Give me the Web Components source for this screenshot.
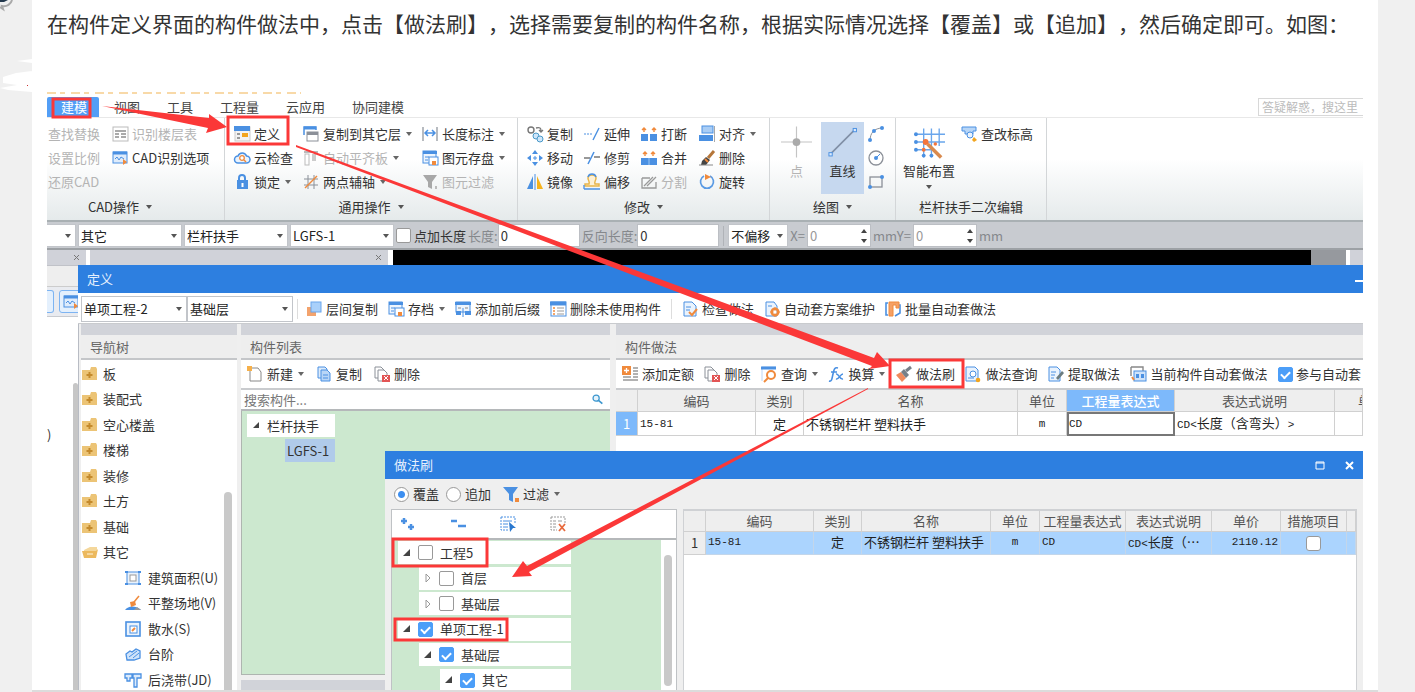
<!DOCTYPE html>
<html lang="zh-CN">
<head>
<meta charset="utf-8">
<title>构件做法 - 做法刷</title>
<style>
html, body { margin: 0; height: 100%; }
body {
  background: #f0f0f0; color: #333; overflow: hidden;
  font: 13px/20px "Noto Sans CJK SC", sans-serif;
  text-spacing-trim: space-all;
}
</style>
</head>
<body>
<help-page></help-page>
<script>
const B = '#4a90e2', O = '#f08a3c', G = '#9a9fa6';
const ICONS = {
  table: `<rect x="1" y="1" width="15" height="14" fill="#fff" stroke="#bbb"/><path d="M3 5h11M3 8h4M9 8h5M3 11h4M9 11h5" stroke="#aaa" stroke-width="2"/>`,
  cadopt: `<rect x="1" y="2" width="14" height="11" fill="#dfecfb" stroke="${B}"/><path d="M1 3h14" stroke="${B}" stroke-width="3"/><path d="M3 9l2-2 2 3 2-3 3 2" stroke="${B}" fill="none"/><path d="M11 9l4 3-4 3z" fill="${O}"/>`,
  define: `<rect x="1" y="1" width="15" height="14" fill="#f3f3f3" stroke="#ccc"/><path d="M0 2.500h16" stroke="${B}" stroke-width="5"/><path d="M3 8h3M3 12h3" stroke="#999" stroke-width="2"/><rect x="8" y="7" width="6" height="4" fill="#f2a51f"/>`,
  cloud: `<path d="M4 13a3.500 3.500 0 0 1 0-7 4.500 4.500 0 0 1 8.500 0A3.500 3.500 0 0 1 12.500 13z" fill="#eaf3fd" stroke="${B}" stroke-width="1.500"/><circle cx="8" cy="8" r="2.300" fill="#fff" stroke="${O}" stroke-width="1.300"/><path d="M10 10l2 2" stroke="${O}" stroke-width="1.500"/>`,
  lock: `<path d="M5 8V4a3 3 0 0 1 6 0v4" fill="none" stroke="${B}" stroke-width="2"/><rect x="3" y="6" width="11" height="9" fill="${B}"/><path d="M8.500 9v4" stroke="#fff" stroke-width="2"/>`,
  copyfloor: `<path d="M1 9V1h12v3" fill="none" stroke="${B}" stroke-width="1.500"/><path d="M1 2h12" stroke="${B}" stroke-width="3"/><rect x="4" y="6" width="11" height="9" fill="#fff" stroke="#8b9098"/><path d="M4 7.500h11" stroke="#8b9098" stroke-width="3"/>`,
  align2: `<path d="M1 2h14" stroke="#bbb" stroke-width="2"/><rect x="2" y="4" width="4" height="11" fill="none" stroke="#bbb"/><rect x="9" y="4" width="4" height="7" fill="#ccc"/>`,
  axis: `<path d="M1 5h14M1 11h14M5 1v14M11 1v14" stroke="#8b9098" fill="none"/><path d="M2 14L14 2" stroke="${O}" stroke-width="1.500"/>`,
  dim: `<path d="M1 1v14M15 1v14" stroke="${G}" stroke-width="1.400"/><path d="M3 7h10M6 4L3 7l3 3M10 4l3 3-3 3" stroke="${B}" fill="none" stroke-width="1.500"/>`,
  save: `<rect x="1" y="1" width="13" height="12" fill="#eef5fd" stroke="${B}"/><path d="M1 2.500h14" stroke="${B}" stroke-width="3"/><path d="M3 7h4M3 10h3" stroke="${B}"/><rect x="7" y="7" width="9" height="8" fill="#fff" stroke="${B}"/><rect x="10" y="11" width="4" height="4" fill="${O}"/>`,
  filterg: `<path d="M1 1h14L10 8v7l-4-2V8z" fill="#a8a8a8"/><rect x="13" y="12" width="2" height="3" fill="#bbb"/>`,
  filter: `<path d="M0 1h15L10 8v8l-4-2V8z" fill="${B}"/><rect x="12" y="12" width="4" height="4" fill="${O}"/>`,
  copy3: `<circle cx="4" cy="4" r="3" fill="none" stroke="#777" stroke-width="1.400"/><path d="M9 2c4-1 5 0 5 3M12 4l2 2 2-2" fill="none" stroke="#777" stroke-width="1.300"/><circle cx="9" cy="10" r="3" fill="#cfe6fa" stroke="#4a9ac9"/><circle cx="13" cy="13" r="3" fill="#cfe6fa" stroke="#4a9ac9"/>`,
  move: `<path d="M8 0l3 4H5zM8 16l3-4H5zM0 8l4-3v6zM16 8l-4-3v6z" fill="${B}"/><path d="M8 6v4M6 8h4" stroke="${B}"/>`,
  mirror: `<path d="M6 2v13H0z" fill="${B}"/><path d="M8 0v16" stroke="${B}"/><path d="M10 2v13h6z" fill="#f6b21b"/>`,
  extend: `<path d="M0 8h9" stroke="${B}" stroke-dasharray="2 1"/><path d="M9 14L15 2" stroke="${B}" stroke-width="1.400"/>`,
  trim: `<path d="M0 8h6M10 7h6" stroke="#777" stroke-width="1.300"/><path d="M4 14L10 2" stroke="${B}" stroke-width="1.600"/>`,
  offset: `<path d="M1 12h14v-2h-4c-1-3 1-3 1-6 0-4-8-4-8 0 0 3 2 3 1 6H1z" fill="#fdf1d6" stroke="#e8b54b" stroke-width="1.500"/><path d="M0 15h16M0 15v-4M4 3c1-4 7-4 8 0" stroke="${B}" fill="none" stroke-width="1.300"/>`,
  brk: `<path d="M0 8h7v7H0zM9 8h7v7H9z" fill="${B}"/><path d="M3 6V2M1 4l2-2 2 2M13 6V2M11 4l2-2 2 2" stroke="${O}" fill="none" stroke-width="1.400"/>`,
  merge: `<path d="M0 8h16v7H0z" fill="${B}"/><path d="M8 8v7" stroke="#9cc6f3"/><path d="M4 6V2M2 4l2-2 2 2M12 6V2M10 4l2-2 2 2" stroke="${O}" fill="none" stroke-width="1.400"/>`,
  split: `<path d="M1 4h8M1 4v10h14V8" stroke="#999" fill="none" stroke-width="1.300"/><path d="M3 12l9-9M6 12l9-9" stroke="#999" stroke-width="1.300"/>`,
  alignr: `<rect x="3" y="0" width="11" height="7" fill="#a9cdf5" stroke="${B}"/><rect x="0" y="9" width="14" height="6" fill="${B}"/><path d="M15.500 0v16" stroke="#aaa"/>`,
  broom: `<path d="M15 1L9 8" stroke="#b5763a" stroke-width="3"/><path d="M3 11l4-4 4 3-4 5H2z" fill="#444"/><path d="M6 9l3 3" stroke="${O}" stroke-width="2"/><path d="M0 15h14" stroke="#888"/>`,
  rotate: `<path d="M11 2a6.500 6.500 0 1 1-6 0" fill="none" stroke="#5a9ae4" stroke-width="1.700"/><path d="M6 0l6 3-6 3z" fill="${O}"/>`,
  arc: `<path d="M2 15C2 7 6 2 15 2" stroke="#8b9098" fill="none"/><circle cx="2" cy="14" r="2" fill="${B}"/><circle cx="6" cy="5" r="2" fill="${B}"/><circle cx="14" cy="2" r="2" fill="${B}"/>`,
  circle: `<circle cx="8" cy="8" r="7" fill="none" stroke="#8b9098" stroke-width="1.300"/><circle cx="8" cy="8" r="2" fill="${B}"/><path d="M8 8l4-4" stroke="${B}"/>`,
  rect: `<rect x="2" y="3" width="12" height="10" fill="none" stroke="#8b9098" stroke-width="1.300"/><circle cx="14" cy="3" r="2" fill="${B}"/><circle cx="2" cy="13" r="2" fill="${B}"/>`,
  point: `<path d="M8 0v16M0 8h16" stroke="#c4c4c4" stroke-width=".6"/><circle cx="8" cy="8" r="2" fill="#aaa"/>`,
  line: `<path d="M2 14L14 2" stroke="#7f8fa5" stroke-width=".8"/><rect x="1" y="13.500" width="1.700" height="1.700" fill="#dceafa" stroke="${B}" stroke-width=".5"/><rect x="13.500" y="1" width="1.700" height="1.700" fill="#dceafa" stroke="${B}" stroke-width=".5"/>`,
  smart: `<path d="M1 4h15M1 8h15M1 12h8M5 1v15M9 1v15M13 1v9" stroke="#6aa6ec" stroke-width=".7"/><circle cx="1" cy="4" r="1" fill="${B}"/><circle cx="1" cy="8" r="1" fill="${B}"/><circle cx="1" cy="12" r="1" fill="${B}"/><circle cx="5" cy="15" r="1" fill="${B}"/><circle cx="9" cy="15" r="1" fill="${B}"/><path d="M7 9l7 7" stroke="#d98a4e" stroke-width="1.800"/><circle cx="6" cy="8" r="1.500" fill="#f4743b"/><circle cx="5" cy="12" r="1" fill="#f4743b"/><circle cx="11" cy="9" r=".9" fill="#f4743b"/>`,
  elev: `<path d="M1 1h14v4h-3v3H4V5H1z" fill="#b8d6f7" stroke="${B}"/><circle cx="9" cy="9" r="3" fill="#eaf3fd" stroke="${B}"/><path d="M13 11l3 3-3 2-2-2z" fill="#f2a51f"/>`,
  floors: `<rect x="1" y="6" width="9" height="9" fill="#f3a36d"/><rect x="5" y="1" width="10" height="10" fill="#a9d0fa" stroke="#6aa6ec"/>`,
  affix: `<rect x="1" y="1" width="14" height="10" fill="#eef5fd" stroke="${B}"/><path d="M0 2.500h16" stroke="${B}" stroke-width="3"/><path d="M3 7h3M10 7h3" stroke="#888"/><path d="M1 10h5v4H1zM10 10h6v4h-6z" fill="${B}"/><path d="M8 7v9" stroke="${B}"/>`,
  list: `<rect x="1" y="1" width="15" height="14" fill="#fff" stroke="${B}"/><path d="M0 2.500h16" stroke="${B}" stroke-width="4"/><path d="M3 7h2M3 10h2M3 13h2" stroke="${O}" stroke-width="1.500"/><path d="M7 7h7M7 10h7M7 13h7" stroke="#999"/>`,
  check: `<path d="M2 1h8l4 4v10H2z" fill="#eaf3fd" stroke="${B}"/><path d="M4 6h5M4 9h4" stroke="${B}"/><path d="M7 11l3 3 5-6" stroke="${O}" fill="none" stroke-width="2"/>`,
  gear: `<path d="M2 1h8l3 4v10H2z" fill="#eaf3fd" stroke="${B}"/><path d="M4 5h4" stroke="${B}"/><circle cx="11" cy="11" r="3.300" fill="none" stroke="${O}" stroke-width="2.500"/><path d="M11 6v10M6 11h10" stroke="${O}"/><circle cx="11" cy="11" r="1.500" fill="#fff"/>`,
  batch: `<path d="M3 2H1v12h2M13 4h2v8l-5 3" fill="none" stroke="${B}" stroke-width="1.600"/><path d="M4 1h10v6h-3V4H8v11H4z" fill="#f5a065" stroke="${O}"/>`,
  new: `<path d="M3 2h8l3 4v9H3z" fill="#fff" stroke="#888"/><rect x="0" y="0" width="5" height="5" fill="#f6b04a"/>`,
  copy: `<path d="M2 1h7l2 2v9H2z" fill="#dcebfb" stroke="${B}"/><path d="M5 4h6l3 3v8H5z" fill="#b8d6f7" stroke="${B}"/><path d="M7 9h5M7 12h5" stroke="${B}"/>`,
  del: `<path d="M1 1h6l3 3v8H1z" fill="#fff" stroke="#8b9098"/><path d="M4 4h6l3 3v8H4z" fill="#fff" stroke="#8b9098"/><rect x="8" y="9" width="8" height="7" fill="#e25555"/><path d="M10 10l4 4M14 10l-4 4" stroke="#fff"/>`,
  quota: `<rect x="0" y="0" width="9" height="9" fill="${O}"/><path d="M4.500 2v5M2 4.500h5" stroke="#fff" stroke-width="1.300"/><path d="M11 2h5M11 5h5M11 8h5M11 11h5M1 11h8M1 14h15" stroke="#999" stroke-width="1.300"/>`,
  query: `<path d="M1 15V1h14" stroke="#bcd6f5" fill="none"/><path d="M0 2h15" stroke="${B}" stroke-width="3"/><circle cx="10" cy="9" r="4" fill="#fff" stroke="${O}" stroke-width="2"/><path d="M7 12l-4 4" stroke="${O}" stroke-width="2"/>`,
  fx: `<path d="M1 15c3 1 3-3 4-7s1-7 5-6M3 6h6" stroke="${B}" fill="none" stroke-width="1.600"/><path d="M8 8c3-1 3 6 7 5M15 8c-3 0-4 6-7 5" stroke="${B}" fill="none" stroke-width="1.500"/>`,
  brush: `<path d="M0 9l5-3 5 6-4 4z" fill="#f08a5c"/><path d="M5 6l3-3 5 6-3 3z" fill="#777f88"/><path d="M10 5l5-4" stroke="#777f88" stroke-width="3"/>`,
  docq: `<path d="M1 1h9l3 3v11H1z" fill="#eaf3fd" stroke="${B}"/><circle cx="8" cy="8" r="3" fill="#fff" stroke="${B}"/><path d="M3 12h6" stroke="${B}"/><circle cx="13" cy="14" r="2.300" fill="#f2a51f"/>`,
  extract: `<path d="M1 1h8l3 3v11H1z" fill="#eaf3fd" stroke="${B}"/><path d="M3 6h5M3 9h4M3 12h3" stroke="${B}"/><path d="M8 12l6-7 2 2-6 7z" fill="#6b7c80"/>`,
  current: `<path d="M1 1h12v4M1 1v9" stroke="#888" fill="none" stroke-width="1.400"/><rect x="4" y="5" width="12" height="10" fill="#cfe3fa" stroke="${B}"/><path d="M6 8h3v4H6zM11 8h3v4h-3z" fill="${B}"/><path d="M2 11l2 3" stroke="${O}" stroke-width="2"/>`,
  folder: `<path d="M0 4h8l1-3h5l1 2v11H0z" fill="#ecc476"/><path d="M7.500 6v6M4.500 9h6" stroke="#c48a2c" stroke-width="2"/>`,
  open: `<path d="M2 6l6-3h7v5H2z" fill="#f4d79b"/><path d="M0 7h14l2-2-2 9H2z" fill="#ecb95e"/><path d="M5 10h6" stroke="#fff5df"/>`,
  area: `<rect x="2" y="2" width="12" height="12" fill="#eaf3fd" stroke="${B}"/><rect x="5" y="5" width="6" height="6" fill="#fff" stroke="#999"/><path d="M0 1h3v2H0zM13 1h3v2h-3zM0 13h3v2H0zM13 13h3v2h-3z" fill="${B}"/>`,
  site: `<path d="M0 15c3-4 10-5 16 0z" fill="${B}"/><path d="M9 15l3-3 4 3z" fill="#999"/><path d="M14 1l-5 6" stroke="${O}" stroke-width="1.500"/><path d="M5 7l5-1 1 4-5 2z" fill="${O}"/>`,
  apron: `<rect x="1" y="1" width="14" height="14" fill="#eaf3fd" stroke="${B}" stroke-width="1.600"/><rect x="5" y="5" width="7" height="7" fill="#fff" stroke="${B}"/><path d="M7 10l3-3" stroke="${O}" stroke-width="2"/>`,
  steps: `<path d="M1 8l4-3 2 1 4-3 4 2v7l-6 2H2z" fill="#cfe3fa" stroke="${B}" stroke-width="1.300"/><path d="M4 11l8-6M8 12l6-5" stroke="${B}"/>`,
  strip: `<path d="M0 2h7v4H5v3H2V6H0zM8 2h8v4h-4v9H9V6H8z" fill="#dcebfb" stroke="${B}" stroke-width="1.300"/>`,
  plus2: `<path d="M4 2v6M1 5h6M11 8v6M8 11h6" stroke="${B}" stroke-width="2.500"/>`,
  minus2: `<path d="M1 5h6M8 10h8" stroke="${B}" stroke-width="2.500"/>`,
  selall: `<path d="M1 1h14v7M1 1v13h8" fill="none" stroke="${B}" stroke-dasharray="2 1"/><path d="M3 5h9M3 8h5M3 11h5" stroke="${B}"/><path d="M9 6l7 6h-3l-3 4z" fill="#2a78cf"/>`,
  selnone: `<path d="M1 1h14v6M1 1v13h6" fill="none" stroke="#999" stroke-dasharray="2 1"/><path d="M3 5h3M8 5h4M3 8h3M3 11h3" stroke="#999"/><path d="M9 8l6 7M15 8l-6 7" stroke="#e8693c" stroke-width="1.800"/>`,
  mag: `<circle cx="6" cy="6" r="4.500" fill="#e4f2fb" stroke="#3d97cf" stroke-width="1.800"/><path d="M9 9l6 5" stroke="#3d97cf" stroke-width="2.500"/>`,
};

/* Registers an element whose shadow root is stamped from a template. */
function define(tag, css, html, setup) {
  const t = document.createElement('template');
  t.innerHTML = `<style>:host{display:block;box-sizing:border-box}*{box-sizing:border-box}${css}</style>${html}`;
  customElements.define(tag, class extends HTMLElement {
    connectedCallback() {
      if (this.shadowRoot) return;
      const root = this.attachShadow({ mode: 'open' });
      root.append(t.content.cloneNode(true));
      if (setup) setup(root, this);
    }
  });
}

const CHECK = `
input[type=checkbox]{appearance:none;flex:none;margin:0;width:15px;height:15px;border:1px solid #999;border-radius:2px;background:#fff;display:grid;place-items:center}
input[type=checkbox]:checked{background:#4c9ef8;border-color:#4c9ef8}
input[type=checkbox]:checked::before{content:"";width:7px;height:4px;border:solid #fff;border-width:0 0 2px 2px;transform:rotate(-45deg)}`;

define('ui-icon', `:host{width:16px;height:16px;flex:none}svg{display:block;width:100%;height:100%;overflow:visible}`,
  `<svg viewBox="0 0 16 16" aria-hidden="true" fill="none"></svg>`,
  (r, h) => { r.querySelector('svg').innerHTML = ICONS[h.getAttribute('name')] || ''; });

define('drop-arrow', `:host{width:6px;flex:none}svg{display:block}`,
  `<svg width="6" height="4" aria-hidden="true"><path d="M0 0h6L3 4z" fill="currentColor"/></svg>`);

define('tool-button', `
:host{flex:none}
button{all:unset;display:flex;align-items:center;gap:4px;height:24px;white-space:nowrap;color:#333}
:host([off]) button{color:#b4b4b4}
drop-arrow{margin-left:1px;color:#666}`,
  `<button type="button"><slot></slot></button>`,
  (r, h) => {
    const b = r.querySelector('button');
    if (h.hasAttribute('icon')) b.insertAdjacentHTML('afterbegin', `<ui-icon name="${h.getAttribute('icon')}"></ui-icon>`);
    if (h.hasAttribute('menu')) b.insertAdjacentHTML('beforeend', '<drop-arrow></drop-arrow>');
    if (h.hasAttribute('off')) b.disabled = true;
    if (h.hasAttribute('label')) b.setAttribute('aria-label', h.getAttribute('label'));
  });

define('big-button', `
button{all:unset;display:flex;flex-direction:column;align-items:center;width:43px;height:72px;padding-top:4px;box-sizing:border-box;white-space:nowrap}
:host([wide]) button{width:52px}
:host([on]) button{background:#c6d8ef}
:host([off]) button{color:#b4b4b4}
ui-icon{width:31px;height:32px;margin-bottom:3px}
drop-arrow{margin-top:4px;color:#555}`,
  `<button type="button"><slot></slot></button>`,
  (r, h) => {
    const b = r.querySelector('button');
    b.insertAdjacentHTML('afterbegin', `<ui-icon name="${h.getAttribute('icon')}"></ui-icon>`);
    if (h.hasAttribute('menu')) b.insertAdjacentHTML('beforeend', '<drop-arrow></drop-arrow>');
  });

define('pick-list', `
:host{position:relative;flex:none;background:#fff;border:1px solid #c2c5ca}
select{appearance:none;width:100%;height:100%;border:0;margin:0;padding:0 12px 0 2px;background:none;font:inherit;color:#222;display:block}
drop-arrow{position:absolute;right:4px;top:50%;margin-top:-2px;color:#555;pointer-events:none}`,
  `<select><option></option></select><drop-arrow></drop-arrow>`,
  (r, h) => {
    r.querySelector('option').textContent = h.getAttribute('value');
    r.querySelector('select').setAttribute('aria-label', h.getAttribute('label'));
  });

define('value-field', `
:host{flex:none}
label{display:flex;align-items:center;color:#85888c;height:100%}
div{display:flex;align-items:center;background:#fff;border:1px solid #bcbfc4;height:23px;width:82px}
:host([spin]) div{width:64px;padding-right:3px}
input{flex:1;min-width:0;width:0;border:0;padding:0 2px;background:none;font:inherit;color:#333;height:100%}
:host([spin]) input{color:#999}
:host([spin]) label{gap:2px}
svg{display:none}:host([spin]) svg{display:block}`,
  `<label><slot></slot><div><input type="text" value="0"><svg width="6" height="14" aria-hidden="true"><path d="M0 4h6L3 0zM0 10h6l-3 4z" fill="#444"/></svg></div></label>`);

define('check-label', `${CHECK}:host{flex:none}label{display:flex;align-items:center;gap:3px;white-space:nowrap;color:#333}`,
  `<label><input type="checkbox"><slot></slot></label>`,
  (r, h) => { r.querySelector('input').checked = h.hasAttribute('checked'); });

define('ribbon-group', `
:host{flex:none;display:flex;flex-direction:column;border-right:1px solid #d3d6d8;padding-top:4px;height:102px}
.body{flex:none;height:72px;display:grid;grid-auto-rows:24px;padding-left:var(--inset,9px);grid-template-columns:var(--cols)}
.cap{height:26px;display:flex;align-items:center;justify-content:center;gap:7px;color:#333;padding-right:var(--cap-shift,0)}
drop-arrow{color:#555}`,
  `<div class="body"><slot></slot></div><div class="cap"><slot name="caption"></slot></div>`,
  (r, h) => { if (!h.hasAttribute('plain')) r.querySelector('.cap').insertAdjacentHTML('beforeend', '<drop-arrow></drop-arrow>'); });

define('ribbon-tabs', `
nav{display:flex;align-items:center;height:21px;gap:27px;border-bottom:1px solid #e8e8e8}
a{color:#444;text-decoration:none;line-height:20px;white-space:nowrap}
a.on{background:#529ef6;color:#fff;padding:0 12px 0 14px;border-radius:2px 2px 0 0;margin-right:-12px}
input{margin-left:auto;width:105px;height:18px;border:1px solid #d8d8d8;border-right:0;padding:0 3px;font:inherit;font-size:12px;background:#fff}
input::placeholder{color:#bbb}`,
  `<nav><a class="on" href="#">建模</a><a href="#">视图</a><a href="#">工具</a><a href="#">工程量</a><a href="#">云应用</a><a href="#">协同建模</a><input type="text" aria-label="搜索" placeholder="答疑解惑，搜这里"></nav>`);

define('ribbon-bar', `
:host{display:flex;height:104px;border-bottom:2px solid #a9b0b3;background:linear-gradient(#fff 40%,#e5eaeb)}
.cad{--cols:64px auto;--inset:1px;width:178px;--cap-shift:31px}
.common{--cols:69px 119px auto;width:293px}
.edit{--cols:57px 57px 58px auto;width:252px}
.draw{--cols:42px 46px auto;width:126px}
.draw big-button{grid-row:1/4}
.draw .pt{margin-left:-4px}
.second{--cols:55px auto;width:151px;--inset:10px}
.second big-button{grid-row:1/4;margin-left:-3px}
.draw ui-icon{align-self:center;margin-left:1px}`,
  `<ribbon-group class="cad"><span slot="caption">CAD操作</span>
    <tool-button off>查找替换</tool-button><tool-button off icon="table">识别楼层表</tool-button>
    <tool-button off>设置比例</tool-button><tool-button icon="cadopt">CAD识别选项</tool-button>
    <tool-button off>还原CAD</tool-button></ribbon-group>
  <ribbon-group class="common"><span slot="caption">通用操作</span>
    <tool-button icon="define">定义</tool-button><tool-button icon="copyfloor" menu>复制到其它层</tool-button><tool-button icon="dim" menu>长度标注</tool-button>
    <tool-button icon="cloud">云检查</tool-button><tool-button icon="align2" menu off>自动平齐板</tool-button><tool-button icon="save" menu>图元存盘</tool-button>
    <tool-button icon="lock" menu>锁定</tool-button><tool-button icon="axis" menu>两点辅轴</tool-button><tool-button icon="filterg" off>图元过滤</tool-button></ribbon-group>
  <ribbon-group class="edit"><span slot="caption">修改</span>
    <tool-button icon="copy3">复制</tool-button><tool-button icon="extend">延伸</tool-button><tool-button icon="brk">打断</tool-button><tool-button icon="alignr" menu>对齐</tool-button>
    <tool-button icon="move">移动</tool-button><tool-button icon="trim">修剪</tool-button><tool-button icon="merge">合并</tool-button><tool-button icon="broom">删除</tool-button>
    <tool-button icon="mirror">镜像</tool-button><tool-button icon="offset">偏移</tool-button><tool-button icon="split" off>分割</tool-button><tool-button icon="rotate">旋转</tool-button></ribbon-group>
  <ribbon-group class="draw"><span slot="caption">绘图</span>
    <big-button class="pt" icon="point" off>点</big-button><big-button icon="line" on>直线</big-button>
    <ui-icon name="arc"></ui-icon><ui-icon name="circle"></ui-icon><ui-icon name="rect"></ui-icon></ribbon-group>
  <ribbon-group class="second" plain><span slot="caption">栏杆扶手二次编辑</span>
    <big-button icon="smart" wide menu>智能布置</big-button><tool-button icon="elev">查改标高</tool-button></ribbon-group>`);

define('property-bar', `
:host{display:flex;align-items:center;gap:2px;height:28px;padding-top:1px;background:#c8cbd0;border-bottom:2px solid #9da1a5;white-space:nowrap}
pick-list{width:104px;height:23px}
.cut{width:29px;border-left:0}.short{width:60px}
i{flex:none;width:1px;height:20px;margin:0 2px;background:#b0b3b8}
span{color:#85888c}`,
  `<pick-list class="cut" value="" label="楼层"></pick-list><pick-list value="其它" label="构件类别"></pick-list><pick-list value="栏杆扶手" label="构件类型"></pick-list><pick-list value="LGFS-1" label="构件名称"></pick-list>
  <check-label>点加长度</check-label><value-field>长度:</value-field><value-field>反向长度:</value-field><i></i>
  <pick-list class="short" value="不偏移" label="偏移"></pick-list><value-field spin>X=</value-field><value-field spin>mmY=</value-field><span>mm</span>`);

define('dock-area', `
:host{position:absolute;inset:0;display:flex;background:#fff}
.bar{height:16px;background:#d0d2d9;border-bottom:1px solid #c0c2c8;display:flex;justify-content:flex-end;align-items:center;padding-right:6px}
.left{width:39px}.mid{width:298px;margin:0 5px 0 4px}.view{flex:1;background:#000}
.grey{width:35px;background:#96999e}.edge{width:13px;margin-left:4px;background:#d0d2d9}
.head{height:21px;background:#eee;border-bottom:1px solid #ccc}
.tools{height:30px;background:#e9ebf0;border-bottom:1px solid #c8cbd0;display:flex;gap:5px;align-items:center}
.tools b{flex:none;width:7px;height:23px;border:1px solid #7db4f2;border-left:0;border-radius:0 3px 3px 0;background:#e4f0fd}
.tools b+b{width:30px;border:1px solid #7db4f2;border-radius:3px;padding:3px}
.list{display:flex;justify-content:space-between;padding:66px 8px 0 0;height:calc(100% - 67px)}
.list p{margin:42px 0 0}
.list u{width:5px;background:#c6c6c6;border-radius:3px 3px 0 0}`,
  `<div class="left"><div class="bar"><svg width="7" height="7"><path d="M1 1l5 5M6 1l-5 5" stroke="#777"/></svg></div><div class="head"></div><div class="tools"><b></b><b><ui-icon name="cadopt"></ui-icon></b></div><div class="list"><p>)</p><u></u></div></div>
  <div class="mid"><div class="bar"><svg width="7" height="7"><path d="M1 1l5 5M6 1l-5 5" stroke="#777"/></svg></div></div>
  <div class="view"></div><div class="grey"></div><div class="edge"></div>`);

define('app-window', `
:host{display:flex;flex-direction:column;overflow:hidden;background:#efefef}
header{flex:none;height:28px;display:flex;align-items:center;justify-content:space-between;background:#2d7fe0;padding:0 0 0 9px}
h2{margin:0;font:inherit;color:#e6f0fd}
main{flex:1;min-height:0;display:flex;flex-direction:column}`,
  `<header><h2></h2><slot name="controls"></slot></header><main><slot></slot></main>`,
  (r, h) => { r.querySelector('h2').textContent = h.getAttribute('heading'); });

define('tree-row', `${CHECK}
:host{height:25px;display:flex;align-items:center;flex:none}
:host(:nth-of-type(even)){height:26px}
label{display:flex;align-items:center;gap:7px;height:23px;width:100%;background:#fff;padding-left:5px;color:#333;white-space:nowrap}
svg{flex:none}`,
  `<label><svg width="8" height="8" aria-hidden="true"><path d="M7 0v7H0z" fill="#444"/></svg><input type="checkbox"><slot></slot></label>`,
  (r, h) => {
    if (h.hasAttribute('closed')) r.querySelector('path').outerHTML = '<path d="M2 0l4 4-4 4z" fill="#fff" stroke="#999"/>';
    r.querySelector('input').checked = h.hasAttribute('checked');
  });

define('nav-tree', `
:host{position:relative;flex:1;min-height:0;background:#fff;overflow:hidden}
ul{list-style:none;margin:0;padding:1px 0 0 1px}
li{display:flex;align-items:center;gap:5px;height:25px;white-space:nowrap}
li:nth-child(even){height:26px}
li.sub{padding-left:43px;gap:7px}
div{position:absolute;right:5px;top:132px;bottom:0;width:8px;border-radius:4px 4px 0 0;background:#c9c9c9}`,
  `<ul>${['板', '装配式', '空心楼盖', '楼梯', '装修', '土方', '基础'].map(t => `<li><ui-icon name="folder"></ui-icon>${t}</li>`).join('')}<li><ui-icon name="open"></ui-icon>其它</li>${[['area', '建筑面积(U)'], ['site', '平整场地(V)'], ['apron', '散水(S)'], ['steps', '台阶'], ['strip', '后浇带(JD)']].map(([i, t]) => `<li class="sub"><ui-icon name="${i}"></ui-icon>${t}</li>`).join('')}</ul><div></div>`);

define('side-panel', `
:host{display:flex;flex-direction:column;border-top:11px solid #d1d3d9;min-width:0;overflow:hidden}
h3{flex:none;margin:0;font:inherit;color:#666;height:25px;line-height:23px;padding-left:9px;background:#eee;border-bottom:2px solid #c4c6c9}`,
  `<h3></h3><slot></slot>`,
  (r, h) => { r.querySelector('h3').textContent = h.getAttribute('heading'); });

define('tool-strip', `
:host{flex:none;display:flex;align-items:center;gap:12px;height:30px;background:#fff;border-bottom:2px solid #c9cbce;padding-left:6px}`, `<slot></slot>`);

define('member-list', `
:host{flex:1;min-height:0;display:flex;flex-direction:column}
form{flex:none;display:flex;align-items:center;height:21px;background:#fff;border-bottom:2px solid #b5b8ba;padding-right:7px;margin:0}
input{flex:1;border:0;padding:0 3px;font:inherit;height:18px;background:none}
input::placeholder{color:#777}
ui-icon{width:11px;height:11px}
.list{height:264px;background:#cce8cf;border-left:1px solid #aeb5b0;border-bottom:1px solid #aeb5b0;padding:3px 5px}
.root{display:flex;align-items:center;gap:7px;width:88px;height:23px;padding-left:6px;background:#fff}
.leaf{width:50px;height:23px;line-height:23px;margin:2px 0 0 38px;padding-left:2px;background:#b0cbea}
footer{flex:1;margin-top:5px;background:#d1d3d9}`,
  `<form><input type="text" aria-label="搜索构件" placeholder="搜索构件..."><ui-icon name="mag"></ui-icon></form>
  <div class="list"><div class="root"><svg width="7" height="7"><path d="M6 0v6H0z" fill="#444"/></svg>栏杆扶手</div><div class="leaf">LGFS-1</div></div><footer></footer>`);

/* Grid of measure items; subclasses name their columns and their one row. */
class DataGrid extends HTMLElement {
  connectedCallback() {
    if (this.shadowRoot) return;
    const { columns, css } = this.constructor;
    this.attachShadow({ mode: 'open' }).innerHTML = `<style>
      :host{display:block;background:#fff;overflow:hidden;flex:1;min-width:0;min-height:0}
      table{width:100%;table-layout:fixed;border-collapse:separate;border-spacing:0}
      th,td{box-sizing:border-box;padding:0 2px;white-space:nowrap;overflow:hidden;text-align:center;font-weight:400;border:solid #d0d0d0;border-width:0 1px 1px 0;line-height:20px}
      th{background:#eee;color:#555}
      td.l{text-align:left}td.r{text-align:right}
      td{color:#222}
      .m{font:11px/20px "Liberation Mono",monospace}
      input{appearance:none;width:15px;height:15px;margin:4px 0 0;border:1px solid #999;border-radius:3px;background:#fff;vertical-align:top}
      ${css}</style>
      <table><colgroup>${columns.map(c => `<col${c[0] ? ` style="width:${c[0]}px"` : ''}>`).join('')}</colgroup>
      <thead><tr>${columns.map(c => `<th scope="col" class="${c[4] || ''}">${c[1]}</th>`).join('')}</tr></thead>
      <tbody><tr>${columns.map((c, i) => i ? `<td class="${c[3] || ''}">${c[2]}</td>` : `<th scope="row">${c[2]}</th>`).join('')}</tr></tbody></table>`;
  }
}
customElements.define('method-grid', class extends DataGrid {
  static css = `thead th{height:22px}tbody th,td{height:23px}tbody th{background:#7db9fb;color:#fff}
    th.on{background:#7db9fb;color:#fff;font-weight:500}td.cur{border:2px solid #777;padding:0}
    .last{text-align:left;padding-left:23px}`;
  static columns = [[22, '', '1'], [118, '编码', '15-81', 'm l'], [48, '类别', '定'], [214, '名称', '不锈钢栏杆 塑料扶手', 'l'],
    [49, '单位', 'm', 'm'], [108, '工程量表达式', 'CD', 'm l cur', 'on'], [160, '表达式说明', '<span class="m">CD&lt;</span>长度（含弯头）<span class="m">&gt;</span>', 'l'], [0, '单价', '', '', 'last']];
});
customElements.define('brush-grid', class extends DataGrid {
  static css = `:host{border:solid #cfd1d4;border-width:2px 1px 0}thead th{height:21px}tbody th,td{height:23px}td{background:#abd4fe;vertical-align:top;border-color:#c3d6ea}th{padding:0}tbody th{color:#333}`;
  static columns = [[22, '', '1'], [108, '编码', '15-81', 'm l'], [48, '类别', '定'], [129, '名称', '不锈钢栏杆 塑料扶手', 'l'], [49, '单位', 'm', 'm'],
    [86, '工程量表达式', 'CD', 'm l'], [86, '表达式说明', '<span class="m">CD&lt;</span>长度（…', 'l'], [69, '单价', '2110.12', 'm r'], [66, '措施项目', '<input type="checkbox" aria-label="措施项目">'], [0, '', '']];
});

define('define-window', `
:host{position:absolute;left:31px;right:0;top:15px;bottom:0}
app-window{height:100%}
.min{width:8px;height:2px;background:#fff;margin-top:4px}
.tools{flex:none;display:flex;align-items:center;gap:10px;height:31px;background:#fff;border-bottom:1px solid #c9cbce;padding:2px 0 0 3px;white-space:nowrap}
.tools pick-list{width:106px;height:26px}.tools pick-list+pick-list{margin-left:-10px}
.tools i{flex:none;width:1px;height:20px;background:#ddd}.tools i:first-of-type{margin:0 -2px 0 -6px}
.cols{flex:1;min-height:0;display:flex;padding-left:2px;border-left:1px solid #b8bcc4}
.nav{width:156px;margin-right:4px}.members{width:369px;margin-right:6px}.methods{flex:1}
.methods tool-strip{justify-content:space-between;padding-right:2px;gap:0}`,
  `<app-window heading="定义"><div class="min" slot="controls"></div>
    <div class="tools"><pick-list value="单项工程-2" label="工程"></pick-list><pick-list value="基础层" label="楼层"></pick-list><i></i>
      <tool-button icon="floors">层间复制</tool-button><tool-button icon="save" menu>存档</tool-button><tool-button icon="affix">添加前后缀</tool-button><tool-button icon="list">删除未使用构件</tool-button><i></i>
      <tool-button icon="check">检查做法</tool-button><tool-button icon="gear">自动套方案维护</tool-button><tool-button icon="batch">批量自动套做法</tool-button></div>
    <div class="cols">
      <side-panel class="nav" heading="导航树"><nav-tree></nav-tree></side-panel>
      <side-panel class="members" heading="构件列表"><tool-strip><tool-button icon="new" menu>新建</tool-button><tool-button icon="copy">复制</tool-button><tool-button icon="del">删除</tool-button></tool-strip><member-list></member-list></side-panel>
      <side-panel class="methods" heading="构件做法"><tool-strip><tool-button icon="quota">添加定额</tool-button><tool-button icon="del">删除</tool-button><tool-button icon="query" menu>查询</tool-button><tool-button icon="fx" menu>换算</tool-button><tool-button icon="brush">做法刷</tool-button><tool-button icon="docq">做法查询</tool-button><tool-button icon="extract">提取做法</tool-button><tool-button icon="current">当前构件自动套做法</tool-button><check-label checked>参与自动套</check-label></tool-strip><method-grid></method-grid></side-panel>
    </div></app-window>`);

define('brush-window', `
:host{position:absolute;left:338px;right:0;top:201px;bottom:0}
app-window{height:100%}
.ctl{display:flex;gap:20px;padding-right:9px}
form{flex:none;height:30px;display:flex;align-items:center;margin:0;padding-left:9px}
form label{display:flex;align-items:center;gap:4px;margin-right:7px}
input[type=radio]{appearance:none;margin:0;width:15px;height:15px;border:1px solid #999;border-radius:50%;background:#fff}
input[type=radio]:checked{background:radial-gradient(#3d8ff0 0 3px,#fff 4px)}
form tool-button{margin-left:5px}
.cols{flex:1;min-height:0;display:flex;gap:6px;padding:0 6px}
.panel{flex:none;width:286px;display:flex;flex-direction:column;border:1px solid #bfc2c5;border-bottom:0;background:#fff}
.acts{flex:none;height:30px;display:flex;align-items:center;gap:34px;padding-left:8px;border-bottom:2px solid #b5b8ba}
.tree{flex:1;min-height:0;display:flex}
.rows{flex:1;background:#cce8cf;overflow:hidden;display:flex;flex-direction:column;padding:0 90px 0 6px}
tree-row.d1{margin-left:21px}tree-row.d2{margin-left:42px}
.scroll{width:15px;padding:15px 3px 4px}
.scroll div{width:8px;height:100%;border-radius:4px;background:#c9c9c9}`,
  `<app-window heading="做法刷"><div class="ctl" slot="controls"><svg width="10" height="9"><path d="M1 1h8v7H1zM1 2h8" fill="none" stroke="#fff" stroke-width="1"/></svg><svg width="9" height="9"><path d="M1 1l7 7M8 1l-7 7" stroke="#fff" stroke-width="2"/></svg></div>
  <form><label><input type="radio" name="mode" checked>覆盖</label><label><input type="radio" name="mode">追加</label><tool-button icon="filter" menu>过滤</tool-button></form>
  <div class="cols"><div class="panel"><div class="acts"><tool-button icon="plus2" label="全部展开"></tool-button><tool-button icon="minus2" label="全部折叠"></tool-button><tool-button icon="selall" label="全选"></tool-button><tool-button icon="selnone" label="取消选择"></tool-button></div>
    <div class="tree"><div class="rows"><tree-row>工程5</tree-row><tree-row class="d1" closed>首层</tree-row><tree-row class="d1" closed>基础层</tree-row><tree-row checked>单项工程-1</tree-row><tree-row class="d1" checked>基础层</tree-row><tree-row class="d2" checked>其它</tree-row></div><div class="scroll"><div></div></div></div></div>
  <brush-grid></brush-grid></div></app-window>`);

/* Red frames and arrows that lead the reader through the three steps. */
define('step-marks', `:host{position:absolute;inset:0;overflow:hidden;pointer-events:none}svg{display:block;width:100%;height:100%}`,
  `<svg aria-hidden="true"><g transform="translate(-47 -92)"><g fill="none" stroke="#fb3838" stroke-width="3">
    <rect x="53" y="99" width="37" height="18"/><rect x="228" y="117" width="60" height="27"/><rect x="890" y="360" width="73" height="27"/><rect x="393" y="539" width="94" height="27"/><rect x="395" y="619" width="112" height="21"/></g>
    <g fill="#fb3838"><path d="M102 106L209 118L209 114L227 127L206 133L208 128Z"/>
    <path d="M296 145L874 358L877 352L890 366L869 369L872 366L296 147Z"/>
    <path d="M868 388L527 566L523 561L512 577L532 576L529 572L868 389Z"/></g></g></svg>`);

define('help-page', `
:host{display:flex;flex-direction:column;height:100vh;position:relative}
article{flex:1;min-height:0;display:flex;flex-direction:column;margin:0 37px 0 32px;padding:0 15px;background:#fff;border-bottom:2px solid #dcdcdc}
p{flex:none;margin:7px 0 53px;font-size:21px;line-height:32px;white-space:nowrap;color:#333}
figure{position:relative;flex:1;min-height:0;margin:0;display:flex;flex-direction:column;overflow:hidden}
.trace{flex:none;height:2px;width:254px;margin-bottom:3px;background:repeating-linear-gradient(90deg,#f8d9a8 0 9px,#fff 9px 13px,#f8d9a8 13px 18px,#fff 18px 24px)}
.work{position:relative;flex:1;min-height:0}
.gutter{position:absolute;left:0;top:0}`,
  `<article><p>在构件定义界面的构件做法中，点击【做法刷】，选择需要复制的构件名称，根据实际情况选择【覆盖】或【追加】，然后确定即可。如图：</p>
  <figure><div class="trace"></div><ribbon-tabs></ribbon-tabs><ribbon-bar></ribbon-bar><property-bar></property-bar>
    <div class="work"><dock-area></dock-area><define-window></define-window><brush-window></brush-window></div>
    <step-marks></step-marks></figure></article>
  <svg class="gutter" width="32" height="100" aria-hidden="true"><path d="M0 0h8L4 2H0z" fill="#22384c"/><path d="M12 0C11 4 7 7 2 6L3 9L0 7" fill="none" stroke="#a9a9a9" stroke-width="2"/><path d="M32 59l-15 2 15 2v8l-16 2-13 4v6l14 2-17 3 8 2 24 2z" fill="#fff"/><path d="M27 85h1v1h-1z" fill="#c33"/></svg>`);
</script>
</body>
</html>
